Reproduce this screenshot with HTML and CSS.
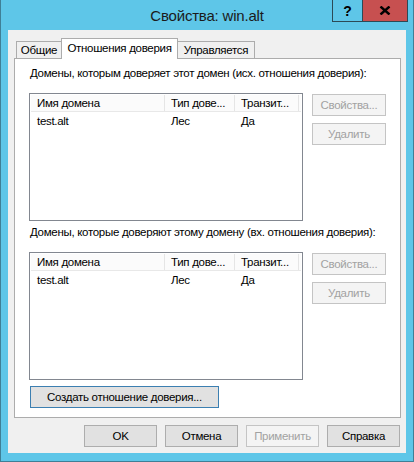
FILE: index.html
```html
<!DOCTYPE html>
<html lang="ru">
<head>
<meta charset="utf-8">
<title>Свойства: win.alt</title>
<link rel="stylesheet" href="styles.css">
</head>
<body>
<div class="window">
  <div class="titlebar">
    <div class="title">Свойства: win.alt</div>
    <div class="caption-buttons">
      <div class="cb help">?</div>
      <div class="cb close">
        <svg width="12" height="9" viewBox="0 0 12 9"><path d="M1.5 0.5 L10.5 8.5 M10.5 0.5 L1.5 8.5" stroke="#000" stroke-width="2.4" fill="none"/></svg>
      </div>
    </div>
  </div>
  <div class="client">
    <div class="tabs">
      <div class="tab tab-general">Общие</div>
      <div class="tab tab-trusts active">Отношения доверия</div>
      <div class="tab tab-managed">Управляется</div>
    </div>
    <div class="panel">
      <div class="label">Домены, которым доверяет этот домен (исх. отношения доверия):</div>
      <div class="list-row">
        <div class="listview">
          <div class="lv-header">
            <div class="cell c1">Имя домена</div>
            <div class="cell c2">Тип дове...</div>
            <div class="cell c3">Транзит...</div>
          </div>
          <div class="lv-row">
            <div class="cell c1">test.alt</div>
            <div class="cell c2">Лес</div>
            <div class="cell c3">Да</div>
          </div>
        </div>
        <div class="side-buttons">
          <button class="btn disabled" disabled>Свойства...</button>
          <button class="btn disabled" disabled>Удалить</button>
        </div>
      </div>
      <div class="label label2">Домены, которые доверяют этому домену (вх. отношения доверия):</div>
      <div class="list-row">
        <div class="listview">
          <div class="lv-header">
            <div class="cell c1">Имя домена</div>
            <div class="cell c2">Тип дове...</div>
            <div class="cell c3">Транзит...</div>
          </div>
          <div class="lv-row">
            <div class="cell c1">test.alt</div>
            <div class="cell c2">Лес</div>
            <div class="cell c3">Да</div>
          </div>
        </div>
        <div class="side-buttons">
          <button class="btn disabled" disabled>Свойства...</button>
          <button class="btn disabled" disabled>Удалить</button>
        </div>
      </div>
      <button class="btn focused create">Создать отношение доверия...</button>
    </div>
    <div class="dialog-buttons">
      <button class="btn dlg">OK</button>
      <button class="btn dlg">Отмена</button>
      <button class="btn dlg disabled" disabled>Применить</button>
      <button class="btn dlg">Справка</button>
    </div>
  </div>
</div>
</body>
</html>
```

FILE: styles.css
```css
* { box-sizing: border-box; }

html, body {
  margin: 0;
  padding: 0;
  background: #5ec6e8;
}

body {
  font-family: "Liberation Sans", Arial, sans-serif;
  font-size: 11.5px;
  letter-spacing: -0.3px;
  color: #000;
}

.window {
  position: relative;
  width: 414px;
  height: 462px;
  background: #5ec6e8;
  border: 1px solid #3f7f96;
  border-top: none;
  padding: 0 7px 8px 7px;
}

.titlebar {
  height: 30px;
}

.title {
  margin: 0 -7px;
  text-align: center;
  font-size: 15px;
  letter-spacing: -0.2px;
  line-height: 31px;
  color: #1b1b1b;
}

.caption-buttons {
  position: absolute;
  top: 0;
  right: 5px;
  display: flex;
}

.cb {
  height: 22px;
  border: 1px solid #2c4a56;
  border-top: none;
  display: flex;
  align-items: center;
  justify-content: center;
}

.cb.help {
  width: 30px;
  border-right: none;
  font-weight: bold;
  font-size: 14px;
  letter-spacing: 0;
  padding-top: 1px;
}

.cb.close {
  width: 46px;
  background: #c75050;
}

.client {
  height: 423px;
  background: #f0f0f0;
  padding: 8px 5px 6px 6px;
}

.tabs {
  height: 20px;
  display: flex;
  align-items: flex-end;
  padding-left: 2px;
}

.tab {
  height: 17px;
  border: 1px solid #acacac;
  border-bottom: none;
  background: #f0f0f0;
  text-align: center;
  line-height: 17px;
}

.tab-general { width: 45px; border-right: none; }
.tab-trusts { width: 117px; }
.tab-managed { width: 77px; border-left: none; }

.tab.active {
  position: relative;
  z-index: 1;
  height: 21px;
  margin-bottom: -1px;
  background: #fff;
  line-height: 18px;
}

.panel {
  height: 360px;
  background: #fff;
  border: 1px solid #acacac;
  padding: 7px 0 0 14px;
}

.label {
  line-height: 15px;
  padding-left: 1px;
  white-space: nowrap;
}

.label2 {
  margin-top: 4px;
}

.list-row {
  display: flex;
  margin-top: 12px;
}

.listview {
  width: 274px;
  height: 128px;
  border: 1px solid #828790;
  padding: 1px;
}

.lv-header,
.lv-row {
  display: flex;
}

.lv-header {
  height: 17px;
  line-height: 17px;
  background: #fbfbfb;
  border-bottom: 1px solid #e8e8e8;
}

.lv-header .cell {
  border-right: 1px solid #e5e5e5;
}

.lv-row {
  height: 18px;
  line-height: 19px;
}

.cell {
  padding-left: 6px;
  white-space: nowrap;
  overflow: hidden;
}

.c1 { width: 134px; }
.c2 { width: 70px; }
.c3 { width: 64px; }

.side-buttons {
  display: flex;
  flex-direction: column;
  gap: 7px;
  margin-left: 9px;
  padding-top: 1px;
}

.btn {
  font-family: "Liberation Sans", Arial, sans-serif;
  font-size: 11.5px;
  font-weight: normal;
  letter-spacing: -0.3px;
  color: #000;
  background: #e1e1e1;
  border: 1px solid #adadad;
  height: 22px;
  padding: 0;
  margin: 0;
  text-align: center;
  line-height: 20px;
}

.side-buttons .btn {
  width: 74px;
}

.btn.disabled {
  background: #f4f4f4;
  border-color: #c4c4c4;
  color: #a2a2a2;
}

.btn.focused {
  border-color: #3c7fb1;
}

.create {
  display: block;
  width: 189px;
  margin: 6px 0 0 1px;
}

.dialog-buttons {
  display: flex;
  justify-content: flex-end;
  gap: 8px;
  margin-top: 7px;
  padding-right: 1px;
}

.btn.dlg {
  width: 73px;
}
```
